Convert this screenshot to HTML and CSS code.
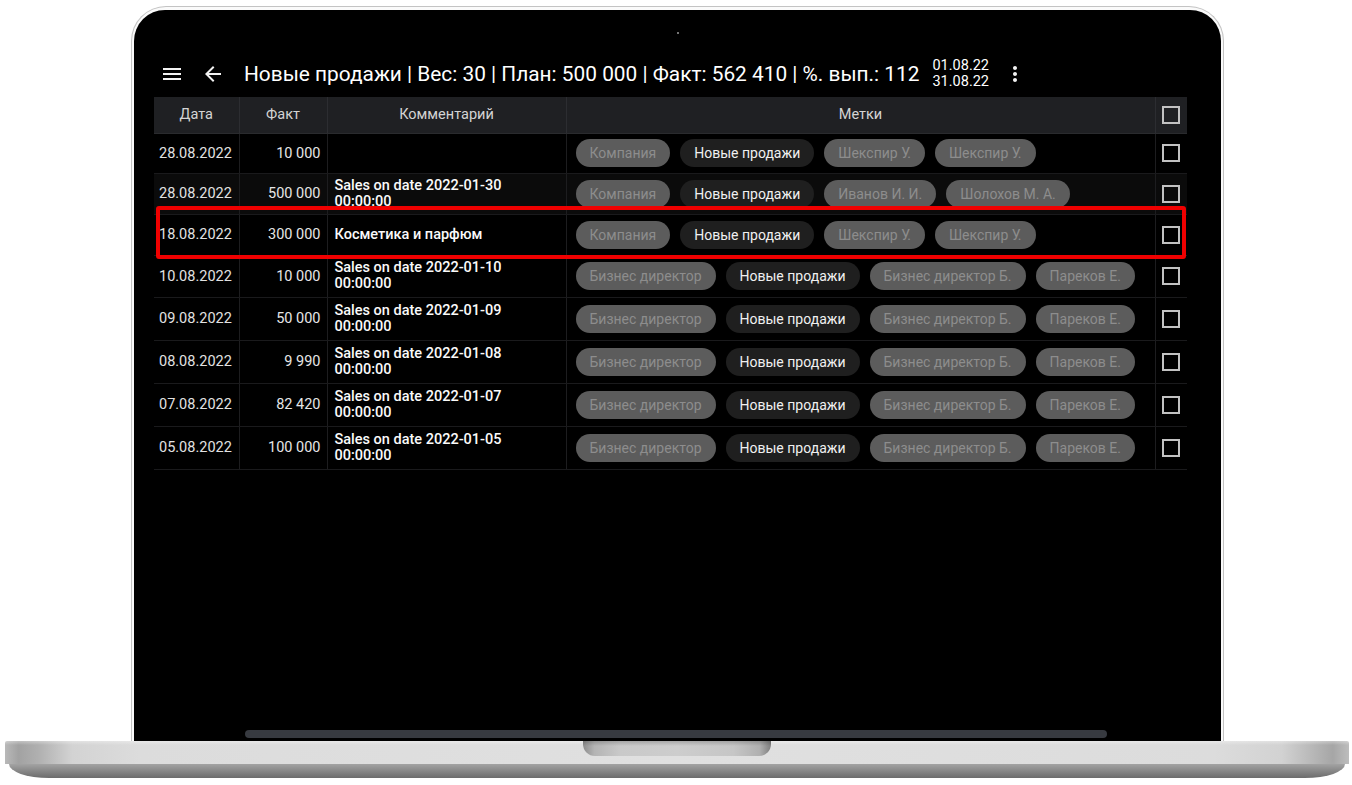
FILE: index.html
```html
<!DOCTYPE html>
<html lang="ru">
<head>
<meta charset="utf-8">
<title>Новые продажи</title>
<link rel="stylesheet" href="styles.css">
</head>
<body>
<div class="device">
  <div class="lid">
    <div class="screen">
      <div class="camera"></div>

      <div class="app">
        <header class="toolbar">
          <svg class="icon menu" viewBox="0 0 24 24" width="24" height="24"><path d="M3 18h18v-2H3v2zm0-5h18v-2H3v2zm0-7v2h18V6H3z"/></svg>
          <svg class="icon back" viewBox="0 0 24 24" width="24" height="24"><path d="M20 11H7.83l5.59-5.59L12 4l-8 8 8 8 1.41-1.41L7.83 13H20v-2z"/></svg>
          <h1 class="title">Новые продажи | Вес: 30 | План: 500 000 | Факт: 562 410 | %. вып.: 112</h1>
          <div class="period">
            <span>01.08.22</span>
            <span>31.08.22</span>
          </div>
          <svg class="icon more" viewBox="0 0 24 24" width="24" height="24"><path d="M12 8c1.1 0 2-.9 2-2s-.9-2-2-2-2 .9-2 2 .9 2 2 2zm0 2c-1.1 0-2 .9-2 2s.9 2 2 2 2-.9 2-2-.9-2-2-2zm0 6c-1.1 0-2 .9-2 2s.9 2 2 2 2-.9 2-2-.9-2-2-2z"/></svg>
        </header>

        <div class="grid-wrap">
          <table class="grid">
            <colgroup>
              <col class="c-date"><col class="c-fact"><col class="c-comment"><col class="c-tags"><col class="c-check">
            </colgroup>
            <thead>
              <tr>
                <th>Дата</th>
                <th>Факт</th>
                <th>Комментарий</th>
                <th>Метки</th>
                <th><span class="checkbox"></span></th>
              </tr>
            </thead>
            <tbody>
              <tr class="r40">
                <td class="date">28.08.2022</td>
                <td class="fact">10 000</td>
                <td class="comment"></td>
                <td class="tags"><div class="chips"><span class="chip">Компания</span><span class="chip dark">Новые продажи</span><span class="chip">Шекспир У.</span><span class="chip">Шекспир У.</span></div></td>
                <td class="check"><span class="checkbox"></span></td>
              </tr>
              <tr class="r41 shaded">
                <td class="date">28.08.2022</td>
                <td class="fact">500 000</td>
                <td class="comment">Sales on date 2022-01-30 00:00:00</td>
                <td class="tags"><div class="chips"><span class="chip">Компания</span><span class="chip dark">Новые продажи</span><span class="chip">Иванов И. И.</span><span class="chip">Шолохов М. А.</span></div></td>
                <td class="check"><span class="checkbox"></span></td>
              </tr>
              <tr class="r41">
                <td class="date">18.08.2022</td>
                <td class="fact">300 000</td>
                <td class="comment">Косметика и парфюм</td>
                <td class="tags"><div class="chips"><span class="chip">Компания</span><span class="chip dark">Новые продажи</span><span class="chip">Шекспир У.</span><span class="chip">Шекспир У.</span></div></td>
                <td class="check"><span class="checkbox"></span></td>
              </tr>
              <tr class="r42">
                <td class="date">10.08.2022</td>
                <td class="fact">10 000</td>
                <td class="comment">Sales on date 2022-01-10 00:00:00</td>
                <td class="tags"><div class="chips"><span class="chip">Бизнес директор</span><span class="chip dark">Новые продажи</span><span class="chip">Бизнес директор Б.</span><span class="chip">Пареков Е.</span></div></td>
                <td class="check"><span class="checkbox"></span></td>
              </tr>
              <tr class="r43">
                <td class="date">09.08.2022</td>
                <td class="fact">50 000</td>
                <td class="comment">Sales on date 2022-01-09 00:00:00</td>
                <td class="tags"><div class="chips"><span class="chip">Бизнес директор</span><span class="chip dark">Новые продажи</span><span class="chip">Бизнес директор Б.</span><span class="chip">Пареков Е.</span></div></td>
                <td class="check"><span class="checkbox"></span></td>
              </tr>
              <tr class="r43">
                <td class="date">08.08.2022</td>
                <td class="fact">9 990</td>
                <td class="comment">Sales on date 2022-01-08 00:00:00</td>
                <td class="tags"><div class="chips"><span class="chip">Бизнес директор</span><span class="chip dark">Новые продажи</span><span class="chip">Бизнес директор Б.</span><span class="chip">Пареков Е.</span></div></td>
                <td class="check"><span class="checkbox"></span></td>
              </tr>
              <tr class="r43">
                <td class="date">07.08.2022</td>
                <td class="fact">82 420</td>
                <td class="comment">Sales on date 2022-01-07 00:00:00</td>
                <td class="tags"><div class="chips"><span class="chip">Бизнес директор</span><span class="chip dark">Новые продажи</span><span class="chip">Бизнес директор Б.</span><span class="chip">Пареков Е.</span></div></td>
                <td class="check"><span class="checkbox"></span></td>
              </tr>
              <tr class="r43">
                <td class="date">05.08.2022</td>
                <td class="fact">100 000</td>
                <td class="comment">Sales on date 2022-01-05 00:00:00</td>
                <td class="tags"><div class="chips"><span class="chip">Бизнес директор</span><span class="chip dark">Новые продажи</span><span class="chip">Бизнес директор Б.</span><span class="chip">Пареков Е.</span></div></td>
                <td class="check"><span class="checkbox"></span></td>
              </tr>
            </tbody>
          </table>
          <div class="highlight"></div>
        </div>
      </div>

      <div class="hscroll"></div>
    </div>
  </div>
  <div class="base">
    <div class="deck"><div class="notch"></div></div>
    <div class="foot"></div>
  </div>
</div>
</body>
</html>
```

FILE: styles.css
```css
* { box-sizing: border-box; }

html, body {
  margin: 0;
  padding: 0;
  background: #fff;
}

body {
  font-family: Roboto, "Noto Sans", "Liberation Sans", sans-serif;
  color: #f1f1f1;
}

/* ---- laptop frame ---- */
.device {
  width: 1352px;
  height: 785px;
  padding-top: 6px;
  overflow: hidden;
}

.lid {
  margin-left: 131px;
  width: 1093px;
  height: 735px;
  border: 1px solid #c3c3c3;
  border-bottom: 0;
  border-radius: 35px 35px 0 0;
  padding: 3px 2px 0;
  background: #fafafa;
}

.screen {
  height: 100%;
  background: #000;
  border-radius: 31px 31px 0 0;
  display: flex;
  flex-direction: column;
}

.camera {
  width: 2px;
  height: 2px;
  margin: 22px auto 0;
  background: #9a9a9a;
  border-radius: 50%;
}

.hscroll {
  margin: auto 0 3px 111px;
  width: 862px;
  height: 8px;
  border-radius: 4px;
  background: #373a40;
}

.base {
  margin-left: 5px;
  width: 1344px;
}

.deck {
  height: 23px;
  display: flex;
  justify-content: center;
  background:
    linear-gradient(180deg, rgba(255,255,255,0.35) 0, rgba(255,255,255,0) 4px),
    linear-gradient(90deg, #b9b9b9 0, #a2a2a2 1%, #b0b0b0 2.5%, #d3d3d3 5%, #dcdcdc 10%, #e0e0e0 50%, #dcdcdc 90%, #d2d2d2 95%, #a6a6a6 98.8%, #bdbdbd 100%);
  border-radius: 2px 2px 0 0;
}

.notch {
  width: 188px;
  height: 15px;
  border-radius: 0 0 12px 12px;
  background:
    linear-gradient(180deg, rgba(0,0,0,0.18) 0, rgba(0,0,0,0) 5px),
    linear-gradient(90deg, #8c8c8c 0, #b4b4b4 6%, #c9c9c9 20%, #cdcdcd 50%, #c6c6c6 80%, #b0b0b0 94%, #7e7e7e 100%);
}

.foot {
  height: 14px;
  margin: 0 4px;
  border-radius: 0 0 40px 40px / 0 0 14px 14px;
  background:
    linear-gradient(180deg, #a3a3a3 0, #8a8a8a 45%, #6c6c6c 100%);
}

/* ---- app ---- */
.app {
  padding-left: 20px;
}

.toolbar {
  height: 40px;
  margin-top: 20px;
  display: flex;
  align-items: center;
  padding-left: 6px;
}

.icon {
  fill: #f2f2f2;
  flex: none;
}

.back {
  margin-left: 17px;
}

.title {
  margin: 0 0 0 19px;
  font-size: 20.85px;
  font-weight: 400;
  color: #fff;
  white-space: nowrap;
}

.period {
  margin-left: 13px;
  display: flex;
  flex-direction: column;
  font-size: 14.5px;
  line-height: 16px;
  color: #fff;
}

.more {
  margin-left: 14px;
}

/* ---- grid ---- */
.grid-wrap {
  position: relative;
  margin-top: 3px;
  width: 1033px;
}

.grid {
  width: 1033px;
  table-layout: fixed;
  border-collapse: collapse;
  font-size: 14.5px;
}

.c-date { width: 85px; }
.c-fact { width: 88px; }
.c-comment { width: 239px; }
.c-tags { width: 589px; }
.c-check { width: 32px; }

.grid th {
  height: 36px;
  padding: 0;
  background: #1f2023;
  color: #d4d4d4;
  font-weight: 400;
  text-align: center;
  border-left: 1px solid #2c2d31;
  border-bottom: 1px solid #2a2b2e;
}

.grid th:first-child { border-left: 0; }

.grid td {
  padding: 0;
  border-left: 1px solid #1d1d1f;
  border-bottom: 1px solid #1a1a1c;
  vertical-align: middle;
}

.grid td:first-child { border-left: 0; }

.grid tr.r40 { height: 40px; }
.grid tr.r41 { height: 41px; }
.grid tr.r42 { height: 42px; }
.grid tr.r43 { height: 43px; }

.grid tr.shaded td { background: #0b0b0b; }

.date {
  padding-left: 5px !important;
  color: #e2e2e2;
  white-space: nowrap;
}

.fact {
  padding-right: 6px !important;
  text-align: right;
  color: #e6e6e6;
  white-space: nowrap;
}

.comment {
  padding: 0 40px 0 7px !important;
  font-weight: 500;
  color: #fafafa;
  line-height: 16px;
}

.tags {
  padding-left: 9px !important;
}

.chips {
  display: flex;
  gap: 10px;
  white-space: nowrap;
}

.chip {
  height: 28px;
  line-height: 28px;
  padding: 0 14px;
  border-radius: 14px;
  background: #5c5c5c;
  color: #8d8d8d;
  font-size: 14px;
}

.chip.dark {
  background: #1f1f1f;
  color: #f0f0f0;
}

.check {
  text-align: center;
}

.checkbox {
  display: inline-block;
  width: 18px;
  height: 18px;
  border: 2px solid #c2c2c2;
  vertical-align: middle;
}

/* callout frame drawn over the third row */
.highlight {
  position: absolute;
  left: 2px;
  top: 109px;
  width: 1030px;
  height: 53px;
  border: 4px solid #f00000;
  border-radius: 3px;
  pointer-events: none;
}
```
